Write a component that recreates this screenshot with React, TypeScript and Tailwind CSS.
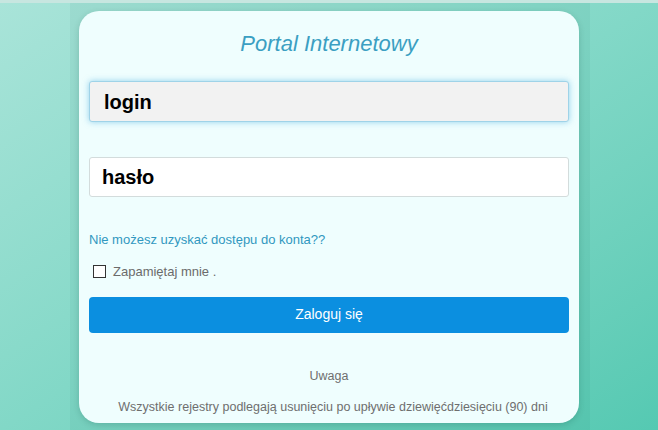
export default function App() {
  return (
    <div
      className="relative h-[430px] w-full overflow-hidden bg-gradient-to-br from-[#a9e4d9] via-[#82d8c7] to-[#55c9b2]"
      style={{ fontFamily: '"Liberation Sans", Arial, sans-serif' }}
    >
      {/* thin light strip on top */}
      <div className="absolute left-0 right-0 top-0 h-[3px] bg-[#c7e6e0]" />

      <div className="ml-[70px] h-full w-[520px] bg-[#0a6a5a]/[0.06] px-[9px] pt-[11px]">
        <div className="flex h-[412px] w-[500px] flex-col rounded-[20px] bg-[#effefe] px-[10px] shadow-[0_2px_6px_rgba(0,60,50,0.18)]">
          <h1 className="mt-[19px] text-center text-[22px] italic leading-[28px] text-[#3b9fc2]">
            Portal Internetowy
          </h1>

          <div className="mt-[23px] flex h-[41px] items-center rounded-[3px] border border-[#9fd3e8] bg-[#f2f2f2] pl-[14px] shadow-[0_0_6px_rgba(70,170,220,0.55)]">
            <span className="text-[20px] font-bold text-black">login</span>
          </div>

          <div className="mt-[35px] flex h-[40px] items-center rounded-[3px] border border-[#d3dcdc] bg-white pl-[12px]">
            <span className="text-[20px] font-bold text-black">hasło</span>
          </div>

          <a className="mt-[35px] text-[13px] leading-[16px] text-[#3198c0]">
            Nie możesz uzyskać dostępu do konta??
          </a>

          <label className="mt-[14px] flex items-center gap-[7px] pl-[4px] text-[13px] text-[#6b6b6b]">
            <span className="h-[13px] w-[13px] border border-[#333] bg-white" />
            Zapamiętaj mnie .
          </label>

          <button className="mt-[15px] flex h-[36px] items-center justify-center rounded-[4px] bg-[#0b8fe0] text-[14px] text-white">
            Zaloguj się
          </button>

          <p className="mt-[34px] text-center text-[12.5px] text-[#6e6e6e]">Uwaga</p>
          <p className="mt-[13px] pl-[8px] text-center text-[12.5px] text-[#6e6e6e]">
            Wszystkie rejestry podlegają usunięciu po upływie dziewięćdziesięciu (90) dni
          </p>
        </div>
      </div>
    </div>
  );
}
